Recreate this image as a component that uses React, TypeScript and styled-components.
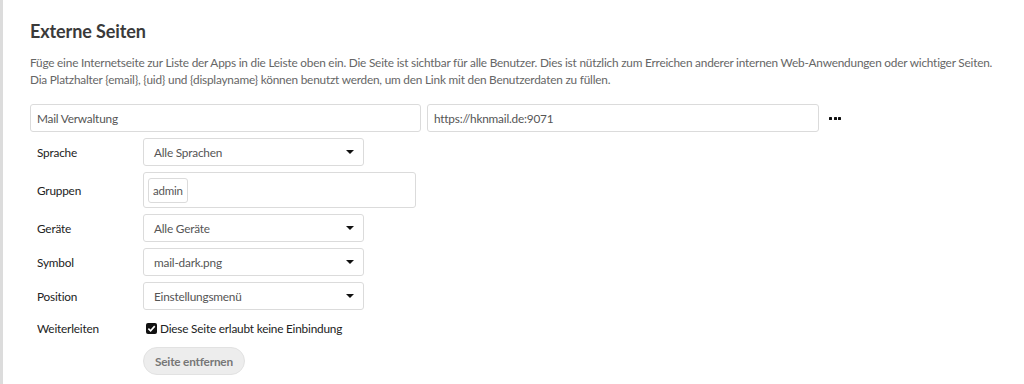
import React from "react";
import styled, { createGlobalStyle } from "styled-components";

const Global = createGlobalStyle`
  html, body { margin: 0; padding: 0; background: #fff; }
  body { font-family: Lato, "Liberation Sans", sans-serif; color: #222; letter-spacing: -0.2px; }
  * { box-sizing: border-box; }
`;

const Page = styled.div`
  display: flex;
  min-height: 384px;
`;

const SideEdge = styled.div`
  width: 3px;
  background: #dcdcdc;
  flex-shrink: 0;
`;

const Section = styled.section`
  flex: 1;
  padding: 17px 27px 0 27px;
`;

const Heading = styled.h2`
  margin: 0 0 9px 0;
  font-size: 18px;
  font-weight: 700;
  color: #3a3a3a;
  line-height: 28px;
  letter-spacing: -0.1px;
`;

const Description = styled.p`
  margin: 0 0 16px 0;
  font-size: 11.8px;
  line-height: 17px;
  color: #666;
  white-space: nowrap;
`;

const TopRow = styled.div`
  display: flex;
  align-items: center;
  gap: 6px;
`;

const TextBox = styled.div<{ $w: number }>`
  width: ${(p) => p.$w}px;
  height: 28px;
  border: 1px solid #dbdbdb;
  border-radius: 3px;
  padding: 0 6px;
  display: flex;
  align-items: center;
  font-size: 11.8px;
  color: #555;
`;

const Dots = styled.div`
  display: flex;
  gap: 1.5px;
  margin-left: 4px;
`;

const Dot = styled.span`
  width: 3px;
  height: 3px;
  background: #111;
  border-radius: 0.5px;
`;

const Fields = styled.div`
  display: flex;
  flex-direction: column;
  gap: 6px;
  margin-top: 6px;
  padding-left: 7px;
`;

const FieldRow = styled.div<{ $h?: number }>`
  display: flex;
  align-items: center;
  ${(p) => (p.$h ? `height: ${p.$h}px;` : "")}
`;

const Label = styled.div`
  width: 106px;
  font-size: 11.8px;
  color: #222;
`;

const Select = styled.div`
  width: 221px;
  height: 28px;
  border: 1px solid #dbdbdb;
  border-radius: 3px;
  padding: 0 9px 0 10px;
  display: flex;
  align-items: center;
  justify-content: space-between;
  font-size: 11.8px;
  color: #555;
`;

const Caret = styled.span`
  width: 0;
  height: 0;
  border-left: 4px solid transparent;
  border-right: 4px solid transparent;
  border-top: 4px solid #111;
`;

const MultiBox = styled.div`
  width: 273px;
  height: 36px;
  border: 1px solid #dbdbdb;
  border-radius: 3px;
  padding: 0 4px;
  display: flex;
  align-items: center;
`;

const Tag = styled.span`
  height: 25px;
  border: 1px solid #dbdbdb;
  border-radius: 3px;
  padding: 0 4px;
  display: flex;
  align-items: center;
  font-size: 11.5px;
  color: #555;
`;

const CheckLabel = styled.label`
  display: flex;
  align-items: center;
  gap: 3px;
  font-size: 11.8px;
  color: #222;
  margin-left: 3px;
`;

const CheckBox = styled.span`
  width: 11px;
  height: 11px;
  background: #111;
  border-radius: 2px;
  display: flex;
  align-items: center;
  justify-content: center;
`;

const ButtonRow = styled.div`
  padding-left: 113px;
  margin-top: 7px;
`;

const Button = styled.button`
  height: 28px;
  padding: 0 11px;
  border: 1px solid #e2e2e2;
  border-radius: 15px;
  background: #ededed;
  font-family: inherit;
  letter-spacing: -0.2px;
  font-size: 11.8px;
  font-weight: 700;
  color: #777;
`;

const Field = ({ label, children, h }: { label: string; children: React.ReactNode; h?: number }) => (
  <FieldRow $h={h}>
    <Label>{label}</Label>
    {children}
  </FieldRow>
);

const Sel = ({ value }: { value: string }) => (
  <Select>
    <span>{value}</span>
    <Caret />
  </Select>
);

export default function App() {
  return (
    <Page>
      <Global />
      <SideEdge />
      <Section>
        <Heading>Externe Seiten</Heading>
        <Description>
          Füge eine Internetseite zur Liste der Apps in die Leiste oben ein. Die Seite ist sichtbar für alle Benutzer. Dies ist nützlich zum Erreichen anderer internen Web-Anwendungen oder wichtiger Seiten.
          <br />
          Dia Platzhalter {"{email}"}, {"{uid}"} und {"{displayname}"} können benutzt werden, um den Link mit den Benutzerdaten zu füllen.
        </Description>
        <TopRow>
          <TextBox $w={391}>Mail Verwaltung</TextBox>
          <TextBox $w={392}>https://hknmail.de:9071</TextBox>
          <Dots>
            <Dot />
            <Dot />
            <Dot />
          </Dots>
        </TopRow>
        <Fields>
          <Field label="Sprache">
            <Sel value="Alle Sprachen" />
          </Field>
          <Field label="Gruppen">
            <MultiBox>
              <Tag>admin</Tag>
            </MultiBox>
          </Field>
          <Field label="Geräte">
            <Sel value="Alle Geräte" />
          </Field>
          <Field label="Symbol">
            <Sel value="mail-dark.png" />
          </Field>
          <Field label="Position">
            <Sel value="Einstellungsmenü" />
          </Field>
          <Field label="Weiterleiten" h={24}>
            <CheckLabel>
              <CheckBox>
                <svg width="9" height="9" viewBox="0 0 10 10">
                  <path d="M1.5 5.2 L4 7.6 L8.6 2.4" stroke="#fff" strokeWidth="1.8" fill="none" />
                </svg>
              </CheckBox>
              Diese Seite erlaubt keine Einbindung
            </CheckLabel>
          </Field>
        </Fields>
        <ButtonRow>
          <Button>Seite entfernen</Button>
        </ButtonRow>
      </Section>
    </Page>
  );
}
